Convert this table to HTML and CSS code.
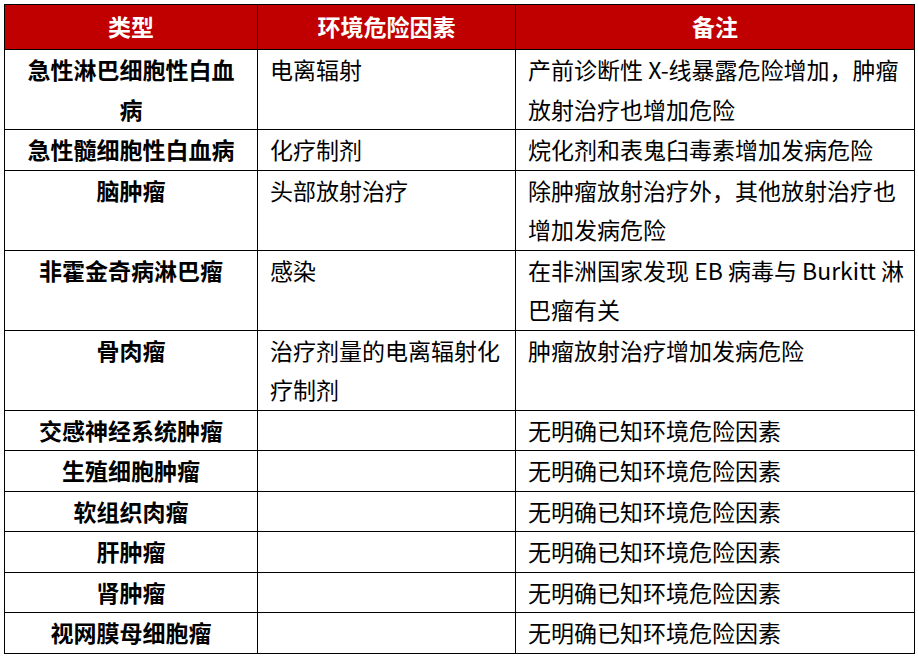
FILE: index.html
```html
<!DOCTYPE html>
<html lang="zh-CN">
<head>
<meta charset="utf-8">
<title>儿童肿瘤环境危险因素</title>
<link rel="stylesheet" href="styles.css">
</head>
<body>
<table class="risk-table">
  <colgroup>
    <col class="col-type">
    <col class="col-factor">
    <col class="col-note">
  </colgroup>
  <thead>
    <tr><th>类型</th><th>环境危险因素</th><th>备注</th></tr>
  </thead>
  <tbody>
    <tr><td class="type">急性淋巴细胞性白血病</td><td>电离辐射</td><td>产前诊断性 X-线暴露危险增加，肿瘤放射治疗也增加危险</td></tr>
    <tr><td class="type">急性髓细胞性白血病</td><td>化疗制剂</td><td>烷化剂和表鬼臼毒素增加发病危险</td></tr>
    <tr><td class="type">脑肿瘤</td><td>头部放射治疗</td><td>除肿瘤放射治疗外，其他放射治疗也增加发病危险</td></tr>
    <tr><td class="type">非霍金奇病淋巴瘤</td><td>感染</td><td>在非洲国家发现 EB 病毒与 Burkitt 淋巴瘤有关</td></tr>
    <tr><td class="type">骨肉瘤</td><td>治疗剂量的电离辐射化疗制剂</td><td>肿瘤放射治疗增加发病危险</td></tr>
    <tr><td class="type">交感神经系统肿瘤</td><td></td><td>无明确已知环境危险因素</td></tr>
    <tr><td class="type">生殖细胞肿瘤</td><td></td><td>无明确已知环境危险因素</td></tr>
    <tr><td class="type">软组织肉瘤</td><td></td><td>无明确已知环境危险因素</td></tr>
    <tr><td class="type">肝肿瘤</td><td></td><td>无明确已知环境危险因素</td></tr>
    <tr><td class="type">肾肿瘤</td><td></td><td>无明确已知环境危险因素</td></tr>
    <tr><td class="type">视网膜母细胞瘤</td><td></td><td>无明确已知环境危险因素</td></tr>
  </tbody>
</table>
</body>
</html>
```
FILE: styles.css
```css
html, body {
  margin: 0;
  padding: 0;
  background: #ffffff;
}

body {
  padding: 4px 0 0 4px;
  font-family: "Noto Sans CJK SC", "Noto Sans", sans-serif;
  color: #000;
}

.risk-table {
  border-collapse: collapse;
  table-layout: fixed;
  width: 910px;
  font-size: 23px;
  line-height: 39.5px;
}

.col-type { width: 253px; }
.col-factor { width: 258px; }
.col-note { width: 399px; }

.risk-table th,
.risk-table td {
  border: 1px solid #000;
  padding: 0 4px 0 12px;
  vertical-align: top;
  text-align: left;
}

.risk-table th {
  background: #c00000;
  color: #fff;
  font-weight: 700;
  text-align: center;
  height: 44px;
  vertical-align: middle;
  padding: 0;
}

.risk-table td.type {
  font-weight: 700;
  text-align: center;
  padding: 0 14px;
}
```
